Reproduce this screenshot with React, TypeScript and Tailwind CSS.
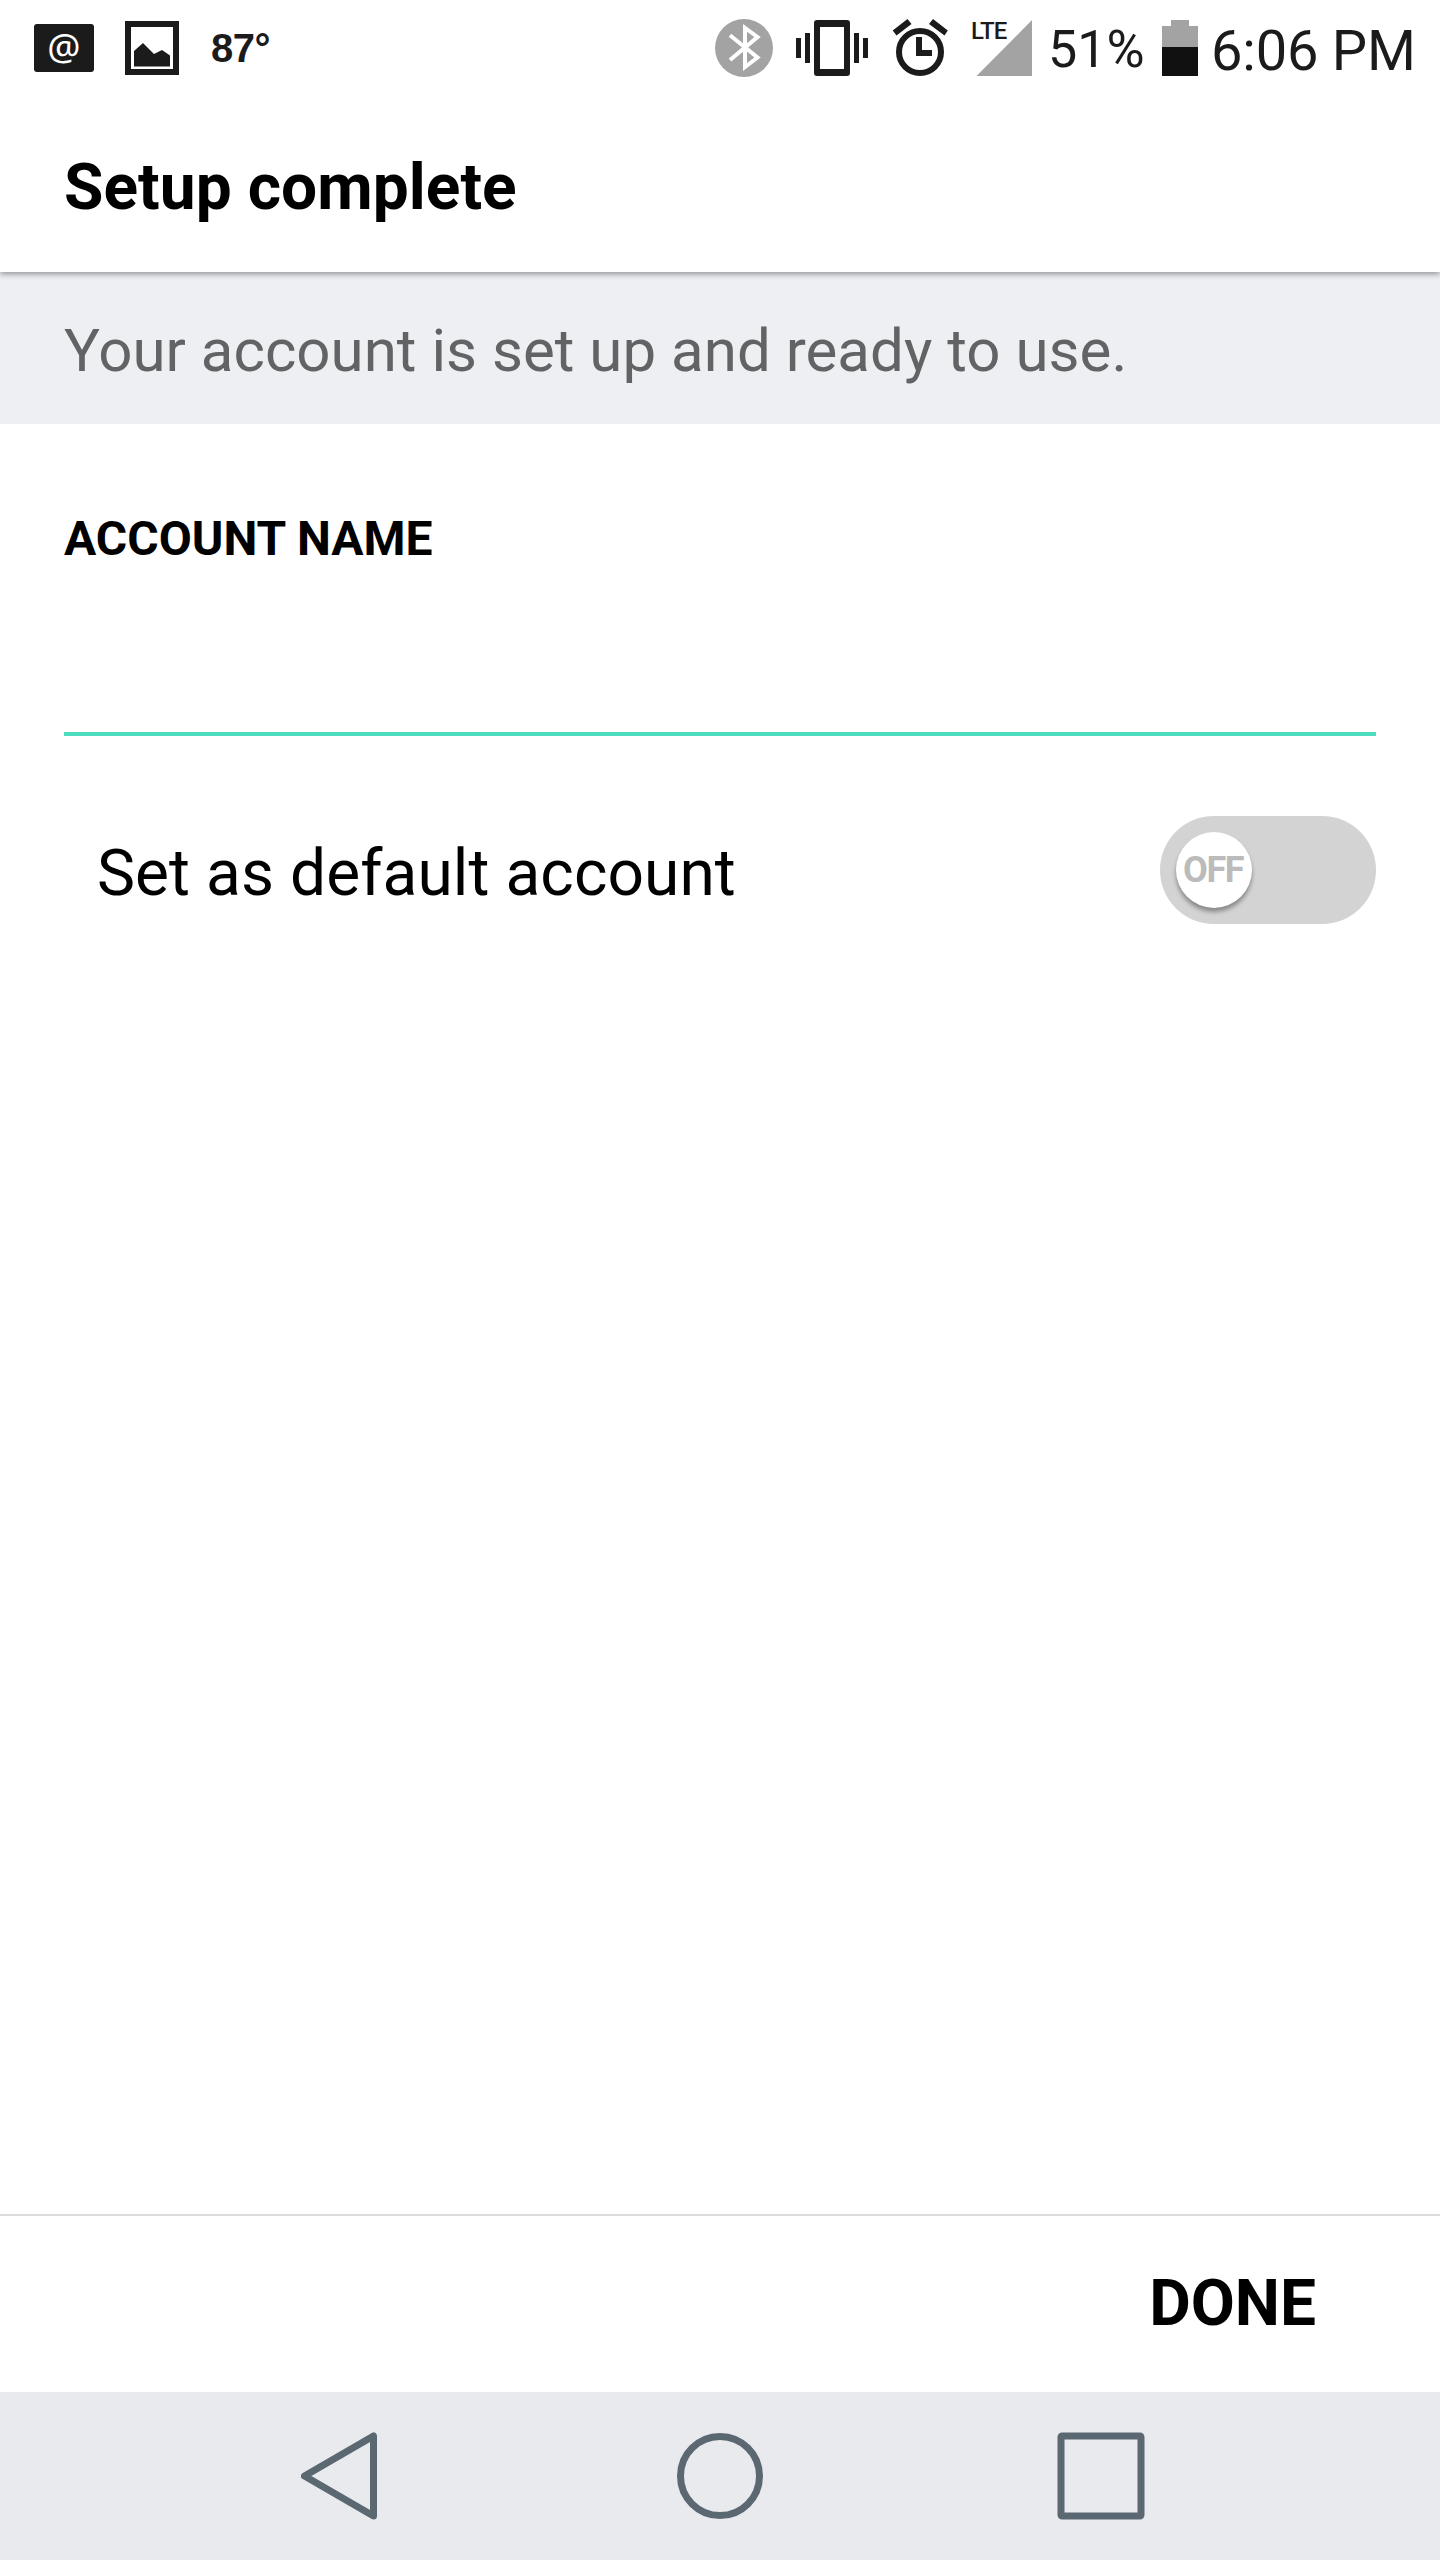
function MailIcon() {
  return (
    <div className="ml-[34px] mt-[24px] h-[48px] w-[60px] rounded-[3px] bg-[#1b1b1b] text-center font-['Noto_Sans'] text-[37px] leading-[44px] text-white">
      @
    </div>
  );
}

function PictureIcon() {
  return (
    <svg className="ml-[31px] mt-[21px] h-[54px] w-[54px]" viewBox="125 21 54 54" fill="#1b1b1b">
      <path fillRule="evenodd" d="M125 21h54v54h-54zM131 27v42h42V27z" />
      <path d="M134 51l9-8 11 11 8-4 8 5.500v11h-36z" />
    </svg>
  );
}

function BluetoothIcon() {
  return (
    <svg className="h-[96px] w-[58px]" viewBox="715 0 58 96">
      <circle cx="744" cy="48" r="29" fill="#a3a3a3" />
      <path d="M730 35.200L757.500 57.500L745 67V28L757.500 37L730 60" fill="none" stroke="#fff" strokeWidth="4" strokeMiterlimit="10" />
    </svg>
  );
}

function VibrateIcon() {
  return (
    <svg className="ml-[23px] h-[96px] w-[72px]" viewBox="796 0 72 96" fill="#1b1b1b">
      <path d="M796 38h5v20h-5zM805 33h5v30h-5zM854 33h5v30h-5zM863 38h5v20h-5z" />
      <path fillRule="evenodd" d="M817 20h30a3 3 0 0 1 3 3v50a3 3 0 0 1-3 3h-30a3 3 0 0 1-3-3V23a3 3 0 0 1 3-3zM820 27v42h24V27z" />
    </svg>
  );
}

function AlarmIcon() {
  return (
    <svg className="ml-[24px] h-[96px] w-[56px]" viewBox="892 0 56 96" fill="#1b1b1b">
      <circle cx="920" cy="52" r="21" fill="none" stroke="#1b1b1b" strokeWidth="6" />
      <path d="M916 37h6v13h10v6h-16zM892.700 30.500L907.500 19l4 5-15 11.600zM947.800 30.500L933 19l-4 5 15.500 11.600z" />
    </svg>
  );
}

function SignalIcon() {
  return (
    <div className="relative ml-[22px] h-[96px] w-[62px]">
      <svg className="h-[96px] w-[62px]" viewBox="970 0 62 96">
        <path d="M976.500 76L1032 20v56z" fill="#a3a3a3" />
      </svg>
      <span className="absolute left-[1px] top-[18px] text-[24px] font-medium leading-[26px] tracking-[-1px]">LTE</span>
    </div>
  );
}

function BatteryIcon() {
  return (
    <svg className="h-[96px] w-[36px]" viewBox="1162 0 36 96" shapeRendering="crispEdges">
      <path d="M1162 26h9v-6h18v6h9v21h-36z" fill="#a3a3a3" />
      <path d="M1162 47h36v29h-36z" fill="#111" />
    </svg>
  );
}

function StatusBar() {
  return (
    <div className="flex h-[96px] items-start text-[#1b1b1b]">
      <MailIcon />
      <PictureIcon />
      <span className="ml-[32px] font-['Liberation_Sans'] text-[40px] font-bold leading-[96px] tracking-[-0.5px]">87°</span>
      <div className="ml-auto flex w-[725px] items-start">
        <BluetoothIcon />
        <VibrateIcon />
        <AlarmIcon />
        <SignalIcon />
        <span className="ml-[16px] w-[114px] text-[52px] leading-[100px]">51%</span>
        <BatteryIcon />
        <span className="ml-[13px] whitespace-nowrap text-[56px] leading-[102px] tracking-[-0.2px]">6:06 PM</span>
      </div>
    </div>
  );
}

function Toggle() {
  return (
    <button role="switch" aria-checked="false" className="flex h-[108px] w-[216px] items-center rounded-full bg-[#d3d3d3] pl-[16px]">
      <span className="flex h-[76px] w-[76px] items-center justify-center rounded-full bg-white pr-[2px] text-[36px] font-bold leading-[78px] tracking-[-1.5px] text-[#bbbbbb] shadow-[0_4px_4px_rgba(0,0,0,0.35)]">
        OFF
      </span>
    </button>
  );
}

function NavBar() {
  return (
    <nav className="flex h-[168px] bg-[#e9eaee] pl-[301px] pt-[40px]">
      <svg className="h-[88px] w-[76px]" viewBox="301 2432 76 88" fill="none" stroke="#5b6871" strokeWidth="7" strokeLinejoin="round">
        <path d="M304.500 2476L373.500 2436V2516z" />
      </svg>
      <svg className="ml-[300px] h-[88px] w-[86px]" viewBox="677 2432 86 88" fill="none" stroke="#5b6871" strokeWidth="7">
        <circle cx="720" cy="2476" r="39.500" />
      </svg>
      <svg className="ml-[294px] h-[88px] w-[88px]" viewBox="1057 2432 88 88" fill="none" stroke="#5b6871" strokeWidth="7">
        <rect x="1061" y="2436" width="80" height="80" rx="1" />
      </svg>
    </nav>
  );
}

export default function App() {
  return (
    <div className="flex h-[2560px] w-[1440px] flex-col bg-white font-['Roboto',sans-serif] text-black">
      <header className="relative z-10 h-[272px] bg-white shadow-[0_2px_6px_rgba(0,0,0,0.4)]">
        <StatusBar />
        <h1 className="pl-[64px] pt-[4px] text-[64px] font-bold leading-[176px] tracking-[0.05px]">Setup complete</h1>
      </header>
      <p className="h-[152px] bg-[#eeeff3] pl-[64px] pt-[3px] text-[60px] leading-[152px] tracking-[0.03px] text-[#626364]">
        Your account is set up and ready to use.
      </p>
      <main className="flex-1 px-[64px] pt-[87px]">
        <h2 className="text-[48px] font-bold leading-[56px]">ACCOUNT NAME</h2>
        <div className="h-[169px] border-b-4 border-[#4ddcbd]" />
        <div className="mt-[80px] flex h-[108px] items-start justify-between pl-[33px]">
          <span className="pt-[4px] text-[64px] leading-[108px] tracking-[0.08px]">Set as default account</span>
          <Toggle />
        </div>
      </main>
      <footer className="flex h-[178px] justify-end border-t-2 border-[#dcdcdc] pr-[124px]">
        <button className="text-[64px] font-bold leading-[174px]">DONE</button>
      </footer>
      <NavBar />
    </div>
  );
}
